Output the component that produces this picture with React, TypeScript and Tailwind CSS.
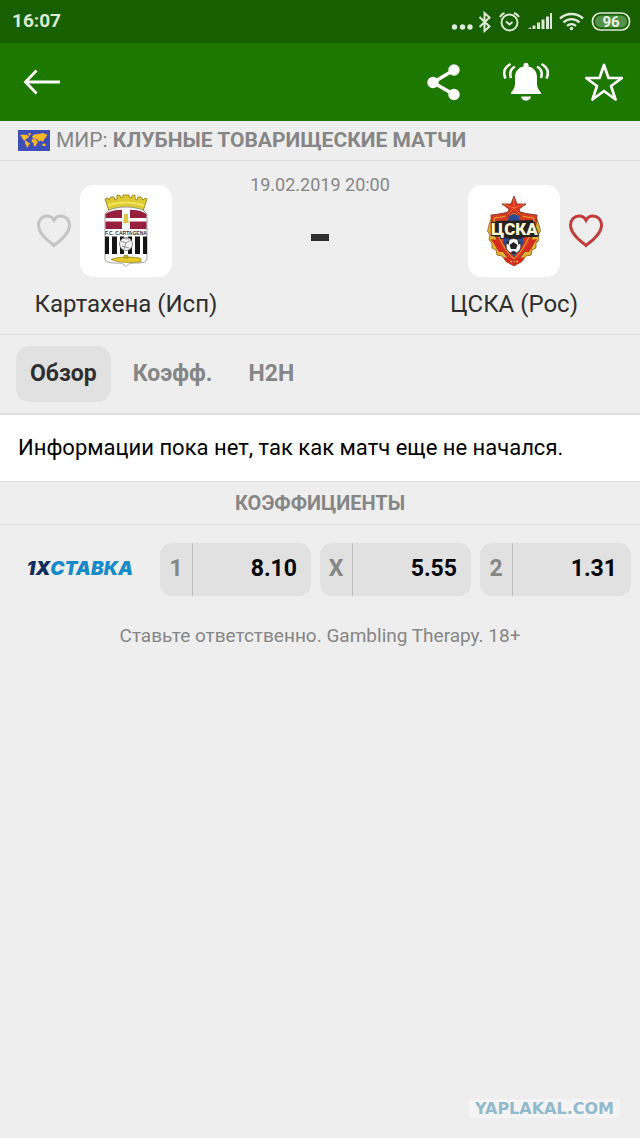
import React, { useState } from 'react';

interface Odd {
  label: string;
  value: string;
}

const TABS = ['Обзор', 'Коэфф.', 'H2H'];

const ODDS: Odd[] = [
  { label: '1', value: '8.10' },
  { label: 'X', value: '5.55' },
  { label: '2', value: '1.31' },
];

const HEART_PATH =
  'M18 31.5 C12 26.5 2.5 19.5 2.5 11 C2.5 5.8 6.4 2 11 2 C14 2 16.6 3.5 18 6.2 C19.4 3.5 22 2 25 2 C29.6 2 33.5 5.8 33.5 11 C33.5 19.5 24 26.5 18 31.5 Z';

const StatusIcons: React.FC = () => (
  <svg width="180" height="24" viewBox="0 0 180 24" fill="none" stroke="#dcebd8" aria-hidden="true">
    <g fill="#dcebd8" stroke="none">
      <circle cx="3.500" cy="17" r="2.7" />
      <circle cx="11.500" cy="17" r="2.7" />
      <circle cx="19" cy="17" r="2.7" />
    </g>
    <path d="M28.500 7 L38.500 16.500 L33.500 21 V3 L38.500 7.500 L28.500 17" strokeWidth="2" />
    <circle cx="58.500" cy="12.500" r="8" strokeWidth="2" />
    <path d="M55 11.500 L58.500 14.500 L61.500 12 M49 7 C50 5 51.500 3.800 53.500 3 M63 3 C65.500 3.800 67 5 68 7" strokeWidth="2" />
    <g fill="#dcebd8" stroke="none">
      <path d="M77 19 L80 17 V19 Z" />
      <rect x="81.500" y="15.500" width="3" height="3.500" />
      <rect x="86" y="12.500" width="3" height="6.500" />
      <rect x="90.500" y="9.500" width="3" height="9.500" />
      <rect x="95" y="6.500" width="3" height="12.500" />
      <rect x="99" y="3" width="2" height="16" />
    </g>
    <path d="M109 8.500 C115.500 2.500 125.500 2.500 132 8.500 M112.500 12.500 C117 8 124 8 128.500 12.500 M116 16 C118.500 13.500 122.500 13.500 125 16" strokeWidth="2.4" />
    <circle cx="120.500" cy="18.500" r="1.800" fill="#dcebd8" stroke="none" />
    <rect x="141.500" y="3" width="37" height="17" rx="8" strokeWidth="1.700" />
    <rect x="144" y="5.500" width="32" height="12" rx="6" fill="#549249" stroke="none" />
    <text
      x="160"
      y="17"
      textAnchor="middle"
      fontFamily="Roboto, sans-serif"
      fontWeight="700"
      fontSize="15"
      fill="#e8f2e5"
      stroke="none"
    >
      96
    </text>
  </svg>
);

const BackIcon: React.FC = () => (
  <svg width="38" height="28" viewBox="0 0 38 28" fill="none" stroke="#fff" strokeWidth="2.800">
    <path d="M37 14 H3 M13.500 2.500 L2.500 14 L13.500 25.500" />
  </svg>
);

const ShareIcon: React.FC = () => (
  <svg width="34" height="38" viewBox="0 0 34 38" fill="#fff">
    <path d="M27 7 L6 19.500 L27 31.500" fill="none" stroke="#fff" strokeWidth="3.500" />
    <circle cx="27" cy="7" r="5.700" />
    <circle cx="6" cy="19.500" r="5.700" />
    <circle cx="27" cy="31.500" r="5.700" />
  </svg>
);

const BellIcon: React.FC = () => (
  <svg width="46" height="40" viewBox="0 0 46 40" fill="#fff">
    <path d="M20.500 3 C20.500 0 25.500 0 25.500 3 V4.500 C31 5.500 34 10 34 15.500 V21 C34 25.500 35.500 27.500 38 30.500 V32 H8 V30.500 C10.500 27.500 12 25.500 12 21 V15.500 C12 10 15 5.500 20.500 4.500 Z" />
    <path d="M18 34.500 H28 C27.500 40 18.500 40 18 34.500 Z" />
    <path
      d="M7.500 2 C1 5.500 0 11 2.500 16.500 M12 4.500 C7.500 7 6.500 11.500 8 16 M38.500 2 C45 5.500 46 11 43.500 16.500 M34 4.500 C38.500 7 39.500 11.500 38 16"
      fill="none"
      stroke="#fff"
      strokeWidth="2.500"
    />
  </svg>
);

const StarIcon: React.FC = () => (
  <svg width="38" height="38" viewBox="0 0 38 38" fill="none" stroke="#fff" strokeWidth="2.700" strokeLinejoin="round">
    <path d="M19 2 L23.500 15 H37 L26 23 L30.500 36.500 L19 28 L7.500 36.500 L12 23 L1 15 H14.500 Z" />
  </svg>
);

const WorldFlag: React.FC = () => (
  <svg width="32" height="21" viewBox="0 0 32 21" aria-hidden="true">
    <rect width="32" height="21" fill="#3f4fb8" />
    <g fill="#fbb829">
      <path d="M2 5 L5 4.500 L9 5 L11 6.500 L10 8 L8 9 L7 11 L5 9.500 L3.500 6.500 Z" />
      <path d="M10 3.500 L13 3 L12 5.500 L10.500 5.500 Z" />
      <path d="M7 10.500 L10 12 L12 13.500 L10.500 15.500 L9 18 L8 15 L7 13 Z" />
      <path d="M14 6.500 L16 4.500 L20 4 L25 3 L29.500 5 L28 7 L26.500 9 L25.500 11 L24 11.500 L22.500 10.500 L21.500 12 L20 10 L18 9 L15 8.500 Z" />
      <path d="M14 9 L18 9.500 L20 12 L18.500 14 L17.500 16.500 L16 16 L15.500 13 L13.500 11.500 Z" />
      <path d="M24 14 L27 13.500 L28 16 L25 16 Z" />
    </g>
  </svg>
);

const CartagenaCrest: React.FC = () => (
  <svg width="44" height="74" viewBox="0 0 44 74" role="img" aria-label="F.C. Cartagena">
    <path
      d="M5 17 L1 5 L4 4 L5 6 L7 3 L10 3 L11 6 L13 5 L13 1 L16 1.500 L17 4 L19 3 V1 H25 V3 L27 4 L28 1.500 L31 1 L31 5 L33 6 L34 3 L37 3 L39 6 L41 4 L43 5 L39 17 C29 13 15 13 5 17 Z"
      fill="#ddca35"
      stroke="#a58b1d"
      strokeWidth="1"
    />
    <path d="M4 11.500 C15 7.500 29 7.500 40 11.500" fill="none" stroke="#f3e65c" strokeWidth="2" />
    <path d="M5 16 C15 12 29 12 39 16 L43 20 V64 C43 69 37 69 31 69 C26 69 24 70 22 72.500 C20 70 18 69 13 69 C7 69 1 69 1 64 V20 Z" fill="#fff" stroke="#888" strokeWidth="0.800" />
    <path d="M5 18 C9 16.500 13 16 18 15.800 V24 H1.500 V20 Z M26 15.800 C31 16 35 16.500 39 18 L42.500 20 V24 H26 Z M1.500 27.500 H18 V35 H1.500 Z M26 27.500 H42.500 V35 H26 Z" fill="#97203f" />
    <path d="M20 20 H24 V24 L25 29 H19 L20 24 Z" fill="#dcc642" />
    <text x="22" y="40.500" textAnchor="middle" fontFamily="Liberation Sans, sans-serif" fontWeight="700" fontSize="5" fill="#333">
      F.C. CARTAGENA
    </text>
    <path d="M1 42.500 H5 V60 H1 Z M8 42.500 H13 V60 H8 Z M16 42.500 H20 V60 H16 Z M24 42.500 H28 V60 H24 Z M31 42.500 H36 V60 H31 Z M39 42.500 H43 V60 H39 Z" fill="#151515" />
    <circle cx="22" cy="50" r="6.500" fill="#f4f4f4" stroke="#777" strokeWidth="0.800" />
    <path d="M17 47 L22 49 L27 46 M22 49 L20 55 M18 52 L25 54 M25 45 L19 44.500" stroke="#888" strokeWidth="0.900" fill="none" />
    <path d="M7 65.500 C13 62.500 30 62.500 37 64.500 V67.500 C30 69 14 69 7 65.500 Z M20 61.500 H24 V64 H20 Z" fill="#e3cb2a" stroke="#8f7c1a" strokeWidth="0.700" />
  </svg>
);

const CskaCrest: React.FC = () => (
  <svg width="56" height="72" viewBox="0 0 56 72" role="img" aria-label="ПФК ЦСКА">
    {/* Wreath */}
    <path
      d="M5 24 L3 30 L1.500 36 L4 40 L3 45 L6 48 L6 53 L10 55 L11 60 L16 61 L20 66 L28 71 L36 66 L40 61 L45 60 L46 55 L50 53 L50 48 L53 45 L52 40 L54.500 36 L53 30 L51 24 Z"
      fill="#e0b530"
      stroke="#8c5a1a"
      strokeWidth="0.800"
    />
    <path d="M5 36 L9 41 M5 46 L11 47 M10 54 L15 53 M51 36 L47 41 M51 46 L45 47 M46 54 L41 53" stroke="#a8701d" strokeWidth="1" fill="none" />
    {/* Shield */}
    <path d="M28 15 C21 18 13 19 5 20 C5 34 13 56 28 69 C43 56 51 34 51 20 C43 19 35 18 28 15 Z" fill="#d93a24" stroke="#7c2b1c" strokeWidth="0.800" />
    <path d="M28 18 C23 21 16 22 8 23 C9 35 16 53 28 64 C40 53 47 35 48 23 C40 22 33 21 28 18 Z" fill="#d93a24" stroke="#e2ad2c" strokeWidth="1" />
    <path d="M28 19 L33 21 L38 48 L28 62 L17 48 L23 21 Z" fill="#2b4b96" />
    <path d="M5 44 L12 45 L18 57 L13 57 Z M51 44 L44 45 L38 57 L43 57 Z" fill="#d62b20" />
    {/* Star */}
    <path d="M28 1 L31 9 H40 L33 14 L36 22 L28 17 L20 22 L23 14 L16 9 H25 Z" fill="#dd3022" stroke="#8f3b18" strokeWidth="0.900" />
    <path d="M28 3 V13 L35 20 M28 13 L38 9.500 M28 13 L21 20 M28 13 L18 9.500" stroke="#f07839" strokeWidth="0.800" fill="none" />
    <path d="M5 41 L9 26 L47 25 L52 42 L40 42 L28 45 L16 42 Z" fill="#24211f" />
    <text
      x="28.500"
      y="40"
      textAnchor="middle"
      fontFamily="Roboto, sans-serif"
      fontWeight="900"
      fontSize="17"
      fill="#fff7cf"
      stroke="#24211f"
      strokeWidth="2"
      paintOrder="stroke"
    >
      ЦСКА
    </text>
    <circle cx="27.500" cy="51" r="7.500" fill="#fff" stroke="#222" strokeWidth="0.800" />
    <path d="M27.500 47 L31.500 50 L30 54 H25 L23.500 50 Z M20.500 48 L23.500 45 L22.500 50 Z M34.500 48 L31.500 45 L32.500 50 Z M24.500 57 L27.500 56 L30.500 57 L27.500 59 Z" fill="#222" />
    <path d="M17 62 L28 64 L39 62 L36 67 L28 71 L20 67 Z" fill="#d62b20" />
    <path d="M24 66.500 H32" stroke="#e9a52c" strokeWidth="1.500" strokeDasharray="2 1" />
  </svg>
);

interface HeartButtonProps {
  label: string;
  className: string;
}

const HeartButton: React.FC<HeartButtonProps> = ({ label, className }) => (
  <button type="button" aria-label={label} className={className}>
    <svg width="36" height="34" viewBox="0 0 36 34" fill="none" stroke="currentColor" strokeWidth="3">
      <path d={HEART_PATH} />
    </svg>
  </button>
);

const Header: React.FC = () => (
  <header className="bg-[#1d7800]">
    <div className="flex h-[43px] items-center justify-between bg-[#175f00] pr-[9px] pl-3">
      <span className="text-[19px] font-bold text-[#dcebd8]">16:07</span>
      <StatusIcons />
    </div>
    <nav className="flex h-[78px] items-center pr-[17px] pl-[23px]">
      <button type="button" aria-label="Назад">
        <BackIcon />
      </button>
      <div className="ml-auto flex items-center gap-[42px]">
        <button type="button" aria-label="Поделиться">
          <ShareIcon />
        </button>
        <div className="flex items-center gap-9">
          <button type="button" aria-label="Уведомления">
            <BellIcon />
          </button>
          <button type="button" aria-label="В избранное">
            <StarIcon />
          </button>
        </div>
      </div>
    </nav>
  </header>
);

const MatchInfo: React.FC = () => (
  <section className="grid h-[174px] grid-cols-[1fr_136px_1fr] border-b border-[#dcdcdc] text-[#2f2f2f]">
    <div className="flex flex-col items-center gap-2 pt-6">
      <div className="grid w-full grid-cols-[1fr_92px_1fr] items-center">
        <HeartButton label="Картахена в избранное" className="mr-2 justify-self-end text-[#c4c4c4]" />
        <div className="flex h-[92px] items-center justify-center rounded-[14px] bg-white">
          <CartagenaCrest />
        </div>
      </div>
      <h2 className="text-[24px] leading-[38px] whitespace-nowrap">Картахена (Исп)</h2>
    </div>
    <div className="flex flex-col items-center pt-3">
      <time className="text-[18px] leading-6 whitespace-nowrap text-[#868686]">19.02.2019 20:00</time>
      <span className="mt-[37px] h-[7px] w-[18px] bg-[#2f2f2f]" />
    </div>
    <div className="flex flex-col items-center gap-2 pt-6">
      <div className="grid w-full grid-cols-[1fr_92px_1fr] items-center">
        <div className="col-start-2 flex h-[92px] items-center justify-center rounded-[14px] bg-white">
          <CskaCrest />
        </div>
        <HeartButton label="ЦСКА в избранное" className="ml-2 justify-self-start text-[#c33c3c]" />
      </div>
      <h2 className="text-[24px] leading-[38px] whitespace-nowrap">ЦСКА (Рос)</h2>
    </div>
  </section>
);

const OddsRow: React.FC = () => (
  <div className="flex h-[89px] items-center pr-[9px]">
    <a href="#bookmaker" className="w-40 shrink-0 text-center font-[Inter,sans-serif] text-[19px] font-black text-[#168bc8] italic">
      <span className="text-[#0f2d5e]">1X</span>СТАВКА
    </a>
    <div className="grid flex-1 grid-cols-3 gap-[9px]">
      {ODDS.map((odd) => (
        <button key={odd.label} type="button" className="flex h-[53px] items-center rounded-xl bg-[#e1e1e1] text-[23px] font-bold">
          <span className="flex h-full w-[33px] items-center justify-center border-r border-[#bdbdbd] text-[#868686]">
            {odd.label}
          </span>
          <span className="flex-1 pr-[14px] text-right text-black">{odd.value}</span>
        </button>
      ))}
    </div>
  </div>
);

const App: React.FC = () => {
  const [activeTab, setActiveTab] = useState(TABS[0]);

  return (
    <div className="flex min-h-screen flex-col bg-[#eee] font-[Roboto,sans-serif]">
      <Header />

      <main className="flex-1">
        {/* League */}
        <div className="flex h-10 items-center gap-[6px] border-b border-[#dcdcdc] pl-[18px] text-[21px] text-[#868686]">
          <WorldFlag />
          <h1 className="whitespace-nowrap">
            МИР: <b>КЛУБНЫЕ ТОВАРИЩЕСКИЕ МАТЧИ</b>
          </h1>
        </div>

        <MatchInfo />

        {/* Tabs */}
        <div role="tablist" className="flex h-20 items-center gap-2 border-b-2 border-[#dedede] px-4 text-[23px] font-bold">
          {TABS.map((tab) => (
            <button
              key={tab}
              type="button"
              role="tab"
              aria-selected={tab === activeTab}
              onClick={() => setActiveTab(tab)}
              className={
                tab === activeTab
                  ? 'h-14 rounded-[14px] bg-[#e1e1e1] px-[14px] text-[#2f2f2f]'
                  : 'h-14 rounded-[14px] px-[14px] text-[#868686]'
              }
            >
              {tab}
            </button>
          ))}
        </div>

        <p className="bg-white px-[18px] py-4 text-[22px] leading-[34px] text-black">
          Информации пока нет, так как матч еще не начался.
        </p>

        {/* Odds */}
        <h2 className="h-11 border-y border-[#dedede] text-center text-[20px] leading-[42px] font-bold text-[#868686]">
          КОЭФФИЦИЕНТЫ
        </h2>
        <OddsRow />

        <p className="pt-2 text-center text-[19px] leading-7 text-[#868686]">
          Ставьте ответственно. Gambling Therapy. 18+
        </p>
      </main>

      <footer className="flex justify-end pr-5 pb-5">
        <span className="bg-[#f4f4f4] px-[6px] text-center font-['DejaVu_Sans',sans-serif] text-[16px] leading-[19px] font-bold text-[#93b9cd]">
          YAPLAKAL.COM
        </span>
      </footer>
    </div>
  );
};

export default App;
